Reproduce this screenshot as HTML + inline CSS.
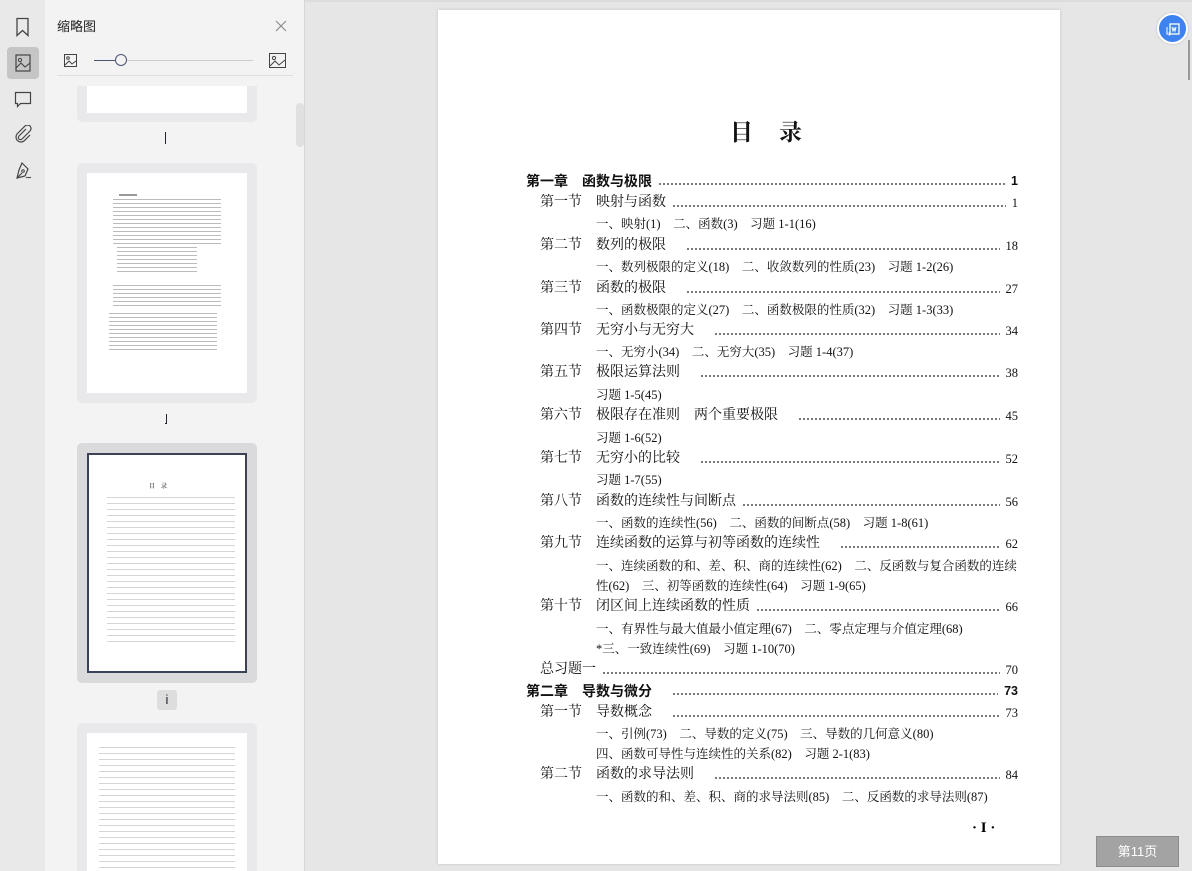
<!DOCTYPE html>
<html><head><meta charset="utf-8"><style>
*{margin:0;padding:0;box-sizing:border-box}
html,body{width:1192px;height:871px;overflow:hidden}
body{background:#e6e6e6;font-family:"Liberation Serif","Noto Serif CJK SC",serif;position:relative}
.bar{position:absolute;left:0;top:0;width:45px;height:871px;background:#e9e9e9}
.panel{position:absolute;left:45px;top:0;width:260px;height:871px;background:#f3f3f3;border-right:1px solid #d6d6d6}
.topline{position:absolute;left:0;top:0;width:1192px;height:2px;background:#dcdcdc}
.ic{position:absolute;left:14px}
.frame{position:absolute;left:77px;width:180px;background:#e9e9eb;border-radius:5px}
.thumb{position:absolute;left:87px;width:160px;background:#fff}
.lbl{position:absolute;font:12px "Liberation Sans",sans-serif;color:#333}
.page{position:absolute;left:438px;top:10px;width:622px;height:854px;background:#fff;box-shadow:0 0 3px rgba(0,0,0,.15)}
.r{position:absolute;height:20px;line-height:20px;font-size:14px;color:#111;display:flex;white-space:nowrap;right:42px}
.r .t{padding-right:6px}
.r .d{flex:1;height:20px;background:radial-gradient(circle,#333 0.7px,transparent 1.1px) 0 11px/4px 4px repeat-x}
.r .p{padding-left:6px;font-size:12.5px}
.s{position:absolute;left:158px;font-size:12.5px;line-height:18px;color:#111;white-space:nowrap}
.b{font-weight:bold;font-family:"Liberation Sans","Noto Sans CJK SC",sans-serif}
.tl{position:absolute;height:2px;background:#bbb}
</style></head><body>
<div class="topline"></div>
<div class="bar">
<svg class="ic" style="top:17px" width="17" height="20" viewBox="0 0 17 20"><path d="M3 1.5h11v17l-5.5-5-5.5 5z" fill="none" stroke="#444" stroke-width="1.3"/></svg>
<div style="position:absolute;left:7px;top:47px;width:32px;height:32px;background:#c5c5c5;border-radius:4px"></div>
<svg class="ic" style="top:54px;left:15px" width="16" height="18" viewBox="0 0 16 18"><rect x="1" y="1" width="14" height="16" fill="none" stroke="#444" stroke-width="1.2"/><circle cx="5" cy="6" r="1.6" fill="none" stroke="#444"/><path d="M1 14l5-5 4 4 5-4" fill="none" stroke="#444" stroke-width="1.1"/></svg>
<svg class="ic" style="top:91px" width="18" height="17" viewBox="0 0 18 17"><path d="M1.5 1.5h15v11h-10l-3 3v-3h-2z" fill="none" stroke="#444" stroke-width="1.2"/></svg>
<svg class="ic" style="top:125px" width="18" height="18" viewBox="0 0 18 18"><path d="M12 4l-7 7a2 2 0 0 0 3 3l8-8a3.5 3.5 0 0 0-5-5l-8 8a5 5 0 0 0 7 7l6-6" fill="none" stroke="#444" stroke-width="1.2"/></svg>
<svg class="ic" style="top:162px" width="20" height="18" viewBox="0 0 20 18"><path d="M8 1l6 6-3 7-8 2 2-8z M3 16l5-5" fill="none" stroke="#444" stroke-width="1.2"/><circle cx="9" cy="9" r="1.3" fill="none" stroke="#444"/><path d="M12 16c2-2 3 1 5-1" fill="none" stroke="#444"/></svg>
</div>
<div class="panel">
<div style="position:absolute;left:12px;top:16px;font:13px 'Liberation Sans','Noto Sans CJK SC',sans-serif;color:#222">缩略图</div>
<svg style="position:absolute;left:230px;top:20px" width="12" height="12" viewBox="0 0 12 12"><path d="M1 1l10 10M11 1L1 11" stroke="#888" stroke-width="1.1"/></svg>
<svg style="position:absolute;left:19px;top:54px" width="13" height="13" viewBox="0 0 13 13"><rect x=".5" y=".5" width="12" height="12" fill="none" stroke="#444"/><circle cx="4" cy="4" r="1.3" fill="none" stroke="#444"/><path d="M1 11l4-4 3 3 4-3" fill="none" stroke="#444"/></svg>
<div style="position:absolute;left:49px;top:60px;width:22px;height:1px;background:#4a5670"></div>
<div style="position:absolute;left:81px;top:60px;width:127px;height:1px;background:#ccc"></div>
<div style="position:absolute;left:70px;top:54px;width:12px;height:12px;border:1.3px solid #4a5670;border-radius:50%;background:#f3f3f3"></div>
<svg style="position:absolute;left:224px;top:53px" width="17" height="15" viewBox="0 0 17 15"><rect x=".5" y=".5" width="16" height="14" fill="none" stroke="#444"/><circle cx="5" cy="5" r="1.6" fill="none" stroke="#444"/><path d="M1 13l5-5 4 4 6-5" fill="none" stroke="#444"/></svg>
<div style="position:absolute;left:12px;top:75px;width:236px;height:1px;background:#dedede"></div>
<div style="position:absolute;left:251px;top:103px;width:8px;height:44px;background:#e0e0e0;border-radius:4px"></div>
</div>
<div style="position:absolute;left:45px;top:86px;width:258px;height:785px;overflow:hidden">
<div class="frame" style="left:32px;top:-10px;height:46px"></div>
<div class="thumb" style="left:42px;top:0;height:27px"></div>
<div class="lbl" style="left:120px;top:46px;width:1px;height:12px;background:#223"></div>
<div class="frame" style="left:32px;top:77px;height:240px"></div>
<div class="thumb" style="left:42px;top:87px;height:220px">
<div class="tl" style="left:32px;top:21px;width:18px;background:#999"></div>
<div class="tl" style="left:26px;top:26px;width:108px;height:46px;background:repeating-linear-gradient(#bbb 0 1px,transparent 1px 4px)"></div>
<div class="tl" style="left:30px;top:74px;width:80px;height:28px;background:repeating-linear-gradient(#bbb 0 1px,transparent 1px 4px)"></div>
<div class="tl" style="left:26px;top:112px;width:108px;height:24px;background:repeating-linear-gradient(#bbb 0 1px,transparent 1px 4px)"></div>
<div class="tl" style="left:22px;top:140px;width:108px;height:40px;background:repeating-linear-gradient(#bbb 0 1px,transparent 1px 4px)"></div>
</div>
<div class="lbl" style="left:120px;top:328px;width:2px;height:10px;border-right:1px solid #223;border-bottom:1px solid #223"></div>
<div class="frame" style="left:32px;top:357px;height:240px;background:#dadadd"></div>
<div class="thumb" style="left:42px;top:367px;height:220px;border:2px solid #3a4258">
<div style="position:absolute;left:60px;top:26px;font-size:6px">目　录</div>
<div class="tl" style="left:18px;top:42px;width:128px;height:150px;background:repeating-linear-gradient(#d6d6d6 0 1px,transparent 1px 6px)"></div>
</div>
<div style="position:absolute;left:112px;top:604px;width:20px;height:20px;background:#ddd;border-radius:3px;font:13px 'Liberation Sans',sans-serif;text-align:center;line-height:20px;color:#223">i</div>
<div class="frame" style="left:32px;top:637px;height:200px"></div>
<div class="thumb" style="left:42px;top:647px;height:200px">
<div class="tl" style="left:12px;top:14px;width:136px;height:180px;background:repeating-linear-gradient(#d6d6d6 0 1px,transparent 1px 6px)"></div>
</div>
</div>

<div class="page">
<div style="position:absolute;left:292px;top:104px;font-size:23px;font-weight:bold;letter-spacing:26px;color:#111">目录</div>
<div class="r b" style="left:88px;top:161px"><span class="t">第一章　函数与极限</span><span class="d"></span><span class="p">1</span></div>
<div class="r" style="left:102px;top:183px"><span class="t">第一节　映射与函数</span><span class="d"></span><span class="p">1</span></div>
<div class="s" style="top:205px">一、映射(1)　二、函数(3)　习题 1-1(16)</div>
<div class="r" style="left:102px;top:226px"><span class="t">第二节　数列的极限　</span><span class="d"></span><span class="p">18</span></div>
<div class="s" style="top:248px">一、数列极限的定义(18)　二、收敛数列的性质(23)　习题 1-2(26)</div>
<div class="r" style="left:102px;top:269px"><span class="t">第三节　函数的极限　</span><span class="d"></span><span class="p">27</span></div>
<div class="s" style="top:291px">一、函数极限的定义(27)　二、函数极限的性质(32)　习题 1-3(33)</div>
<div class="r" style="left:102px;top:311px"><span class="t">第四节　无穷小与无穷大　</span><span class="d"></span><span class="p">34</span></div>
<div class="s" style="top:333px">一、无穷小(34)　二、无穷大(35)　习题 1-4(37)</div>
<div class="r" style="left:102px;top:353px"><span class="t">第五节　极限运算法则　</span><span class="d"></span><span class="p">38</span></div>
<div class="s" style="top:376px">习题 1-5(45)</div>
<div class="r" style="left:102px;top:396px"><span class="t">第六节　极限存在准则　两个重要极限　</span><span class="d"></span><span class="p">45</span></div>
<div class="s" style="top:419px">习题 1-6(52)</div>
<div class="r" style="left:102px;top:439px"><span class="t">第七节　无穷小的比较　</span><span class="d"></span><span class="p">52</span></div>
<div class="s" style="top:461px">习题 1-7(55)</div>
<div class="r" style="left:102px;top:482px"><span class="t">第八节　函数的连续性与间断点</span><span class="d"></span><span class="p">56</span></div>
<div class="s" style="top:504px">一、函数的连续性(56)　二、函数的间断点(58)　习题 1-8(61)</div>
<div class="r" style="left:102px;top:524px"><span class="t">第九节　连续函数的运算与初等函数的连续性　</span><span class="d"></span><span class="p">62</span></div>
<div class="s" style="top:547px">一、连续函数的和、差、积、商的连续性(62)　二、反函数与复合函数的连续</div>
<div class="s" style="top:567px">性(62)　三、初等函数的连续性(64)　习题 1-9(65)</div>
<div class="r" style="left:102px;top:587px"><span class="t">第十节　闭区间上连续函数的性质</span><span class="d"></span><span class="p">66</span></div>
<div class="s" style="top:610px">一、有界性与最大值最小值定理(67)　二、零点定理与介值定理(68)</div>
<div class="s" style="top:630px">*三、一致连续性(69)　习题 1-10(70)</div>
<div class="r" style="left:102px;top:650px"><span class="t">总习题一</span><span class="d"></span><span class="p">70</span></div>
<div class="r b" style="left:88px;top:671px"><span class="t">第二章　导数与微分　</span><span class="d"></span><span class="p">73</span></div>
<div class="r" style="left:102px;top:693px"><span class="t">第一节　导数概念　</span><span class="d"></span><span class="p">73</span></div>
<div class="s" style="top:715px">一、引例(73)　二、导数的定义(75)　三、导数的几何意义(80)</div>
<div class="s" style="top:735px">四、函数可导性与连续性的关系(82)　习题 2-1(83)</div>
<div class="r" style="left:102px;top:755px"><span class="t">第二节　函数的求导法则　</span><span class="d"></span><span class="p">84</span></div>
<div class="s" style="top:778px">一、函数的和、差、积、商的求导法则(85)　二、反函数的求导法则(87)</div>
<div style="position:absolute;left:534px;top:810px;font-size:15px;font-weight:bold">· I ·</div>
</div>

<div style="position:absolute;left:1157px;top:13px;width:31px;height:31px;border-radius:50%;background:#3d82ee;border:2px solid #fff;box-shadow:0 0 2px rgba(0,0,0,.2)">
<svg style="position:absolute;left:6px;top:6px" width="16" height="16" viewBox="0 0 16 16"><rect x="5" y="3" width="9" height="10" fill="none" stroke="#fff" stroke-width="1.3"/><path d="M7 6l1 4 1-3 1 3 1-4" fill="none" stroke="#fff"/><path d="M2 6v7h3m-1-2l1.5 2-1.5 1.5" fill="none" stroke="#fff"/></svg>
</div>
<div style="position:absolute;left:1188px;top:40px;width:2px;height:40px;background:#999"></div>
<div style="position:absolute;left:1096px;top:836px;width:83px;height:31px;background:#a3a3a3;border:1px solid #8c8c8c;color:#fff;font:13px 'Liberation Sans','Noto Sans CJK SC',sans-serif;text-align:center;line-height:29px">第11页</div>
</body></html>
